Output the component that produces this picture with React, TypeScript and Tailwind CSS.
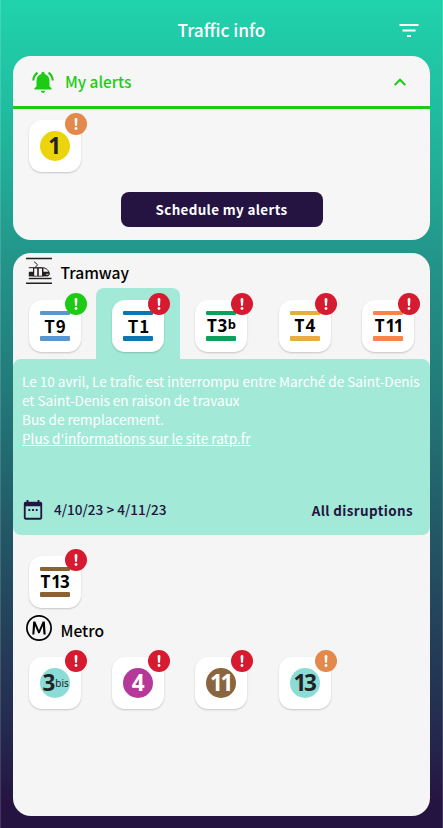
import type { ReactNode } from "react";

type Tone = "red" | "green" | "orange";

const toneClass: Record<Tone, string> = {
  red: "bg-[#d61a30]",
  green: "bg-[#1dcb15]",
  orange: "bg-[#e2894b]",
};

function Badge({ tone }: { tone: Tone }) {
  return (
    <span className={`absolute -right-[6px] -top-[7.5px] flex size-[22px] items-center justify-center rounded-full ${toneClass[tone]}`}>
      <svg viewBox="0 0 22 22" className="size-[22px]" fill="#fff">
        <path d="M9.6 6.4a1.4 1.4 0 0 1 2.8 0l-.35 5.6a1.05 1.05 0 0 1-2.1 0z" />
        <circle cx="11" cy="15.5" r="1.4" />
      </svg>
    </span>
  );
}

function Tile({ tone, children }: { tone: Tone; children: ReactNode }) {
  return (
    <div className="relative flex size-[52px] items-center justify-center rounded-[13px] bg-white shadow-[0_1px_2px_rgba(0,0,0,0.2)]">
      {children}
      <Badge tone={tone} />
    </div>
  );
}

function Tram({ bar, tone, children, className }: { bar: string; tone: Tone; children: ReactNode; className: string }) {
  return (
    <Tile tone={tone}>
      <div className="flex h-[30px] w-[30px] flex-col items-center">
        <span className={`h-[4px] w-full shrink-0 rounded-[1px] ${bar}`} />
        <span className={`flex h-[21px] items-center whitespace-nowrap leading-none text-black ${className}`}>{children}</span>
        <span className={`h-[5px] w-full shrink-0 rounded-[1px] ${bar}`} />
      </div>
    </Tile>
  );
}

function Metro({ color, tone, children }: { color: string; tone: Tone; children: ReactNode }) {
  return (
    <Tile tone={tone}>
      <span className={`flex size-[30px] items-center justify-center rounded-full font-['Noto_Sans',sans-serif] text-[22.5px] font-bold leading-none ${color}`}>
        {children}
      </span>
    </Tile>
  );
}

function BellIcon() {
  return (
    <svg viewBox="0 0 24 24" className="size-[26px]" fill="#1dcb15">
      <path d="M7.58 4.08 6.15 2.65C3.75 4.48 2.17 7.3 2.03 10.5h2a8.445 8.445 0 0 1 3.55-6.42zm12.39 6.42h2c-.15-3.2-1.73-6.02-4.12-7.85l-1.42 1.43a8.495 8.495 0 0 1 3.54 6.42zM18 11c0-3.07-1.64-5.64-4.5-6.32V4c0-.83-.67-1.5-1.5-1.5s-1.5.67-1.5 1.5v.68C7.63 5.36 6 7.92 6 11v5l-2 2v1h16v-1l-2-2v-5zm-6 11c1.1 0 2-.9 2-2h-4c0 1.1.9 2 2 2z" />
    </svg>
  );
}

function TramIcon() {
  return (
    <svg viewBox="0 0 26 27" className="h-[27px] w-[26px]" fill="none" stroke="#231f20">
      <path d="M0 1.5h26M0 26.200h26" strokeWidth="1.4" />
      <path d="M2.800 21.500h22.700" strokeWidth="1.4" />
      <path d="M8 4.600l3.600 3.200-2.200 2.400" strokeWidth="1" />
      <path d="M2.800 10.700h13.500c4 0 6.800 3 6.800 6 0 1.400-.7 2-2 2H2.800" strokeWidth="1" />
      <path d="M2.800 14.800h20.400l.3 2.500-1.400 2H2.800z" fill="#231f20" stroke="none" />
      <path d="M7 10.700h10.500v8.600H7z" fill="#231f20" stroke="none" />
      <path d="M8.200 11.500h3v7.200h-3zM12.800 11.500h3.200v7.200h-3.200z" fill="#f5f5f5" stroke="none" />
      <path d="M20 17.300h2.500" stroke="#f5f5f5" strokeWidth=".8" />
    </svg>
  );
}

function CalendarIcon() {
  return (
    <svg viewBox="0 0 24 24" className="mt-px size-[22px]" fill="#251442">
      <path fillRule="evenodd" d="M20 3h-1V1h-2v2H7V1H5v2H4c-1.1 0-2 .9-2 2v15.5c0 1.1.9 2 2 2h16c1.1 0 2-.9 2-2V5c0-1.1-.9-2-2-2zm0 17.5H4V8h16z" />
      <path d="M7 11h2v2H7zm4 0h2v2h-2zm4 0h2v2h-2z" />
    </svg>
  );
}

function MetroIcon() {
  return (
    <svg viewBox="0 0 26 26" className="size-[26px]" fill="#000">
      <circle cx="13" cy="13" r="12.1" fill="none" stroke="#000" strokeWidth="1.7" />
      <path d="M6.3 19.6 7.2 6.5h2.1L13 15.2l3.7-8.700h2.100l.9 13.100h-2.200l-.7-8.600-3.100 7.300h-1.500L9.100 11l-.8 8.600z" />
    </svg>
  );
}

const cjk = "font-['Noto_Sans_CJK_SC',sans-serif] text-[17px] font-bold pl-[1.5px] pb-[1px]";
const noto = "font-['Noto_Sans',sans-serif] text-[17px] font-bold";
const cell = "flex justify-center";

export default function App() {
  return (
    <div className="flex h-[828px] w-[443px] flex-col overflow-hidden border-x border-white/15 bg-[linear-gradient(180deg,#20d3ac_0%,#20bda0_13%,#23958a_31%,#227c7a_46%,#235263_67%,#242c50_87%,#251442_97%)] px-[12px] font-['Noto_Sans_CJK_SC',sans-serif] font-medium">
      <header className="flex h-[56px] shrink-0 items-center pt-[3px]">
        <span className="w-[40px]" />
        <h1 className="flex-1 text-center text-[17.3px] leading-[24px] text-white">Traffic info</h1>
        <span className="flex w-[40px] justify-center pr-[3px]">
          <svg viewBox="0 0 20 14" className="h-[14px] w-[20px]" fill="none" stroke="#fff" strokeWidth="2">
            <path d="M.5 2h19M3.5 7.5h13M8 13h4" />
          </svg>
        </span>
      </header>

      <section className="flex h-[184px] shrink-0 flex-col rounded-[18px] bg-[#f6f6f6]">
        <div className="flex h-[53px] shrink-0 items-center border-b-[3px] border-[#1dcb15] pl-[17px] pr-[24px] pt-[1px] text-[#1dcb15]">
          <BellIcon />
          <span className="-mt-[2px] ml-[9px] flex-1 text-[15.4px] leading-[24px]">My alerts</span>
          <svg viewBox="0 0 12 8" className="h-[8px] w-[12px]" fill="none" stroke="#1dcb15" strokeWidth="2">
            <path d="M.7 7 6 1.7 11.3 7" />
          </svg>
        </div>
        <div className="mt-[11px] grid grid-cols-5">
          <div className={cell}><Metro tone="orange" color="bg-[#ecd40c] text-[#222]">1</Metro></div>
        </div>
        <button className="mx-auto mt-[20px] h-[35px] w-[202px] rounded-[8px] bg-[#251442] pb-[2px] text-[13.4px] font-bold leading-[24px] tracking-[0.36px] text-white">
          Schedule my alerts
        </button>
      </section>

      <section className="mt-[13px] h-[563px] shrink-0 rounded-[18px] bg-[#f5f5f5]">
        <div className="flex h-[35px] items-center pl-[13px]">
          <TramIcon />
          <h2 className="ml-[8.5px] mt-[3px] text-[15.6px] leading-[24px] text-black">Tramway</h2>
        </div>
        <div className="grid h-[71px] grid-cols-5">
          <div className={`${cell} pt-[12px]`}><Tram tone="green" bar="bg-[#5b96ce]" className={`${cjk} tracking-[0.8px]`}>T9</Tram></div>
          <div className={`${cell} rounded-t-[8px] bg-[#a2ead7] pt-[12px]`}><Tram tone="red" bar="bg-[#0b76b0]" className={`${cjk} tracking-[0.8px]`}>T1</Tram></div>
          <div className={`${cell} pt-[12px]`}><Tram tone="red" bar="bg-[#109e5c]" className={noto}>T<span className="ml-[0.5px]">3</span><span className="mb-[2px] ml-[0.5px] text-[13px]">b</span></Tram></div>
          <div className={`${cell} pt-[12px]`}><Tram tone="red" bar="bg-[#e6ad40]" className={`${noto} pl-[1px] tracking-[1px]`}>T4</Tram></div>
          <div className={`${cell} pt-[12px]`}><Tram tone="red" bar="bg-[#f8844b]" className={noto}>T<span className="ml-[1px] tracking-[-1.5px]">11</span></Tram></div>
        </div>
        <div className="flex h-[176px] flex-col rounded-[8px] bg-[#a2ead7] pl-[9px] pr-[17px] pt-[13px]">
          <p className="whitespace-nowrap text-[13.55px] font-normal leading-[19px] text-white">
            Le 10 avril, Le trafic est interrompu entre Marché de Saint-Denis<br />
            et Saint-Denis en raison de travaux<br />
            Bus de remplacement.<br />
            <span className="underline">Plus d'informations sur le site ratp.fr</span>
          </p>
          <div className="mt-[48px] flex items-center text-[13.6px] leading-[24px] text-[#251442]">
            <CalendarIcon />
            <span className="ml-[10px] flex-1">4/10/23 &gt; 4/11/23</span>
            <span className="mt-[2px] text-[13.4px] font-bold tracking-[0.4px]">All disruptions</span>
          </div>
        </div>
        <div className="mt-[21px] grid grid-cols-5">
          <div className={cell}><Tram tone="red" bar="bg-[#8c6230]" className={noto}>T<span className="ml-[1px] tracking-[-1px]">13</span></Tram></div>
        </div>
        <div className="mt-[7px] flex h-[26px] items-center pl-[13px]">
          <MetroIcon />
          <h2 className="ml-[8.5px] mt-[3px] text-[15.6px] leading-[24px] text-black">Metro</h2>
        </div>
        <div className="mt-[16px] grid grid-cols-5">
          <div className={cell}><Metro tone="red" color="bg-[#8bdbd7] text-[#222]"><span className="pl-[2px]">3</span><span className="text-[10px] font-normal">bis</span></Metro></div>
          <div className={cell}><Metro tone="red" color="bg-[#b43999] text-white">4</Metro></div>
          <div className={cell}><Metro tone="red" color="bg-[#8b653e] text-white"><span className="-ml-[2px] tracking-[-2.5px]">11</span></Metro></div>
          <div className={cell}><Metro tone="orange" color="bg-[#8bdbd7] text-[#222]"><span className="-ml-[2px] tracking-[-2.5px]">13</span></Metro></div>
        </div>
      </section>
    </div>
  );
}
